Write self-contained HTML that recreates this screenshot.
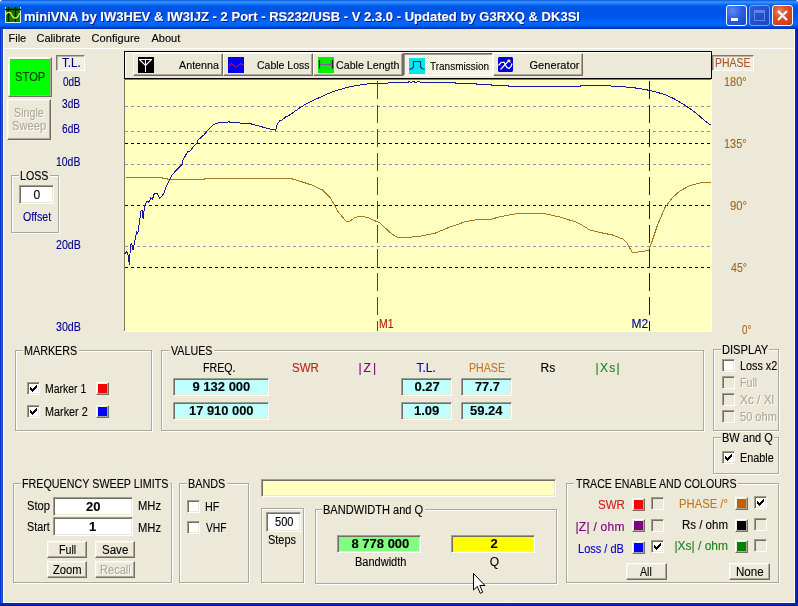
<!DOCTYPE html>
<html><head><meta charset="utf-8"><title>miniVNA</title>
<style>
*{box-sizing:border-box;margin:0;padding:0}
html,body{width:798px;height:606px;overflow:hidden;background:#fff}
body{position:relative;font-family:"Liberation Sans",sans-serif;font-size:12px;color:#000;-webkit-font-smoothing:none}
.a{position:absolute}
.t{position:absolute;white-space:pre;line-height:14px;height:14px;transform-origin:0 0;-webkit-text-stroke:0.12px currentColor}
.gb{position:absolute;border:1px solid #ACA899;box-shadow:1px 1px 0 #fff, inset 1px 1px 0 #fff}
.gl{position:absolute;background:#ECE9D8;height:12px}
.sunk{position:absolute;border:1px solid;border-color:#9D9D92 #fff #fff #9D9D92;box-shadow:inset 1px 1px 0 #716F64, inset -1px -1px 0 #ECE9D8}
.btn{position:absolute;background:#ECE9D8;border:1px solid;border-color:#fff #716F64 #716F64 #fff;box-shadow:inset -1px -1px 0 #ACA899, inset 1px 1px 0 #F4F2E8}
.cb{position:absolute;width:13px;height:13px;background:#fff;border:1px solid;border-color:#9D9D92 #fff #fff #9D9D92;box-shadow:inset 1px 1px 0 #716F64, inset -1px -1px 0 #ECE9D8}
.cb.dis{background:#ECE9D8}
.cbtn{position:absolute;width:13px;height:13px;border:1px solid;border-color:#fff #716F64 #716F64 #fff;box-shadow:inset -1px -1px 0 #ACA899, inset 1px 1px 0 #F1EFE2}
.dis-t{color:#ACA899;text-shadow:1px 1px 0 #fff}
</style></head>
<body>
<div id="w" style="position:absolute;left:0;top:0;width:798px;height:606px;will-change:transform">
<div class="a" style="left:0;top:0;width:798px;height:606px;border-radius:4px 4px 0 0;background:#0831D9"></div>
<div class="a" style="left:0;top:0;width:798px;height:29px;border-radius:4px 4px 0 0;background:linear-gradient(to bottom,#0A50D8 0%,#2A80FC 4%,#3A90FF 7%,#2C88FF 10%,#1074F8 14%,#0262EE 18%,#0057E5 24%,#0054E3 30%,#0055EB 56%,#005BF5 66%,#026AFE 78%,#0061FC 86%,#0052E0 91%,#0040C8 95%,#0030B8 100%)"></div>
<div class="a" style="left:0;top:29px;width:3px;height:577px;background:linear-gradient(to right,#0034DA 0 1px,#2060E6 1px 2px,#1846B4 2px 3px)"></div>
<div class="a" style="left:795px;top:29px;width:3px;height:577px;background:linear-gradient(to left,#00169C,#0A24B4 50%,#0A2ABC)"></div>
<div class="a" style="left:0;top:603px;width:798px;height:3px;background:linear-gradient(to top,#00169C,#0A24B4 50%,#0A2ABC)"></div>
<div class="a" style="left:3px;top:29px;width:792px;height:574px;background:#ECE9D8;border:1px solid #fff;border-top-color:#E4ECF8"></div>
<div class="a" style="left:4px;top:48px;width:791px;height:1px;background:#fff"></div>
<svg class="a" style="left:5px;top:7px" width="16" height="16" viewBox="0 0 16 16">
<rect x="0" y="0" width="16" height="16" fill="#0A7A0A"/>
<path d="M0.5 0V15.5H15.5V0" fill="none" stroke="#D8F0F0" stroke-width="1"/>
<path d="M0 2.5H16M3.5 0V15M10.5 0V15" stroke="#001800" stroke-width="1.4" fill="none"/>
<path d="M0.5 8 L2 5.8 L4.5 5.2 L6 6.5 L7.5 9.5 L9 10.8 L11 11 L13 9.5 L14.5 6" stroke="#E0F020" stroke-width="1.3" fill="none"/>
</svg>
<span class="t" style="left:24.0px;top:10.0px;font-size:13px;color:#fff;font-weight:bold;letter-spacing:0.02px;text-shadow:1px 1px 0 #0A1883;">miniVNA by IW3HEV &amp; IW3IJZ - 2 Port - RS232/USB - V 2.3.0 - Updated by G3RXQ &amp; DK3SI</span>
<div class="a" style="left:726px;top:5px;width:21px;height:21px;border:1px solid #fff;border-radius:3px;background:radial-gradient(circle at 30% 25%,#5C8CF4 0%,#2E62E0 40%,#1746C8 100%)"><div class="a" style="left:4px;top:12px;width:7px;height:3px;background:#fff"></div></div>
<div class="a" style="left:749px;top:5px;width:21px;height:21px;border:1px solid #7C9CEC;border-radius:3px;background:linear-gradient(135deg,#3560D8 0%,#2450CC 50%,#1C44BE 100%)"><div class="a" style="left:4px;top:4px;width:11px;height:11px;border:1px solid #5F84E4;border-top-width:3px"></div></div>
<div class="a" style="left:772px;top:5px;width:21px;height:21px;border:1px solid #fff;border-radius:3px;background:radial-gradient(circle at 35% 30%,#EE8A6A 0%,#E0502A 35%,#C4361A 100%)"><svg class="a" style="left:0;top:0" width="19" height="19" viewBox="0 0 19 19"><path d="M5 5L14 14M14 5L5 14" stroke="#fff" stroke-width="2.2" fill="none"/></svg></div>
<span class="t" style="left:8.5px;top:31.0px;font-size:11px;">File</span>
<span class="t" style="left:36.5px;top:31.0px;font-size:11px;">Calibrate</span>
<span class="t" style="left:91.5px;top:31.0px;font-size:11px;letter-spacing:0.08px;">Configure</span>
<span class="t" style="left:151.5px;top:31.0px;font-size:11px;">About</span>
<div class="btn" style="left:8px;top:57px;width:44px;height:40px;background:#00FF00"></div>
<span class="t" style="left:14.5px;top:70.0px;color:#004000;transform:scaleX(0.935);">STOP</span>
<div class="btn" style="left:7px;top:99px;width:44px;height:41px;"></div>
<span class="t dis-t" style="left:13.8px;top:106.0px;transform:scaleX(0.891);">Single</span>
<span class="t dis-t" style="left:11.9px;top:119.0px;transform:scaleX(0.929);">Sweep</span>
<div class="sunk" style="left:56px;top:55px;width:29px;height:16px;background:#F1EFE4;box-shadow:inset 1px 1px 0 #B8B5A6;border-color:#7E7C72 #fff #fff #7E7C72"></div>
<span class="t" style="left:62.0px;top:56.0px;color:#000090;transform:scaleX(0.961);">T.L.</span>
<span class="t" style="left:63.3px;top:75.0px;color:#000090;transform:scaleX(0.833);">0dB</span>
<span class="t" style="left:62.3px;top:97.0px;color:#000090;transform:scaleX(0.85);">3dB</span>
<span class="t" style="left:62.3px;top:122.0px;color:#000090;transform:scaleX(0.85);">6dB</span>
<span class="t" style="left:56.3px;top:155.0px;color:#000090;transform:scaleX(0.87);">10dB</span>
<span class="t" style="left:56.3px;top:238.0px;color:#000090;transform:scaleX(0.889);">20dB</span>
<span class="t" style="left:56.3px;top:320.0px;color:#000090;transform:scaleX(0.889);">30dB</span>
<div class="gb" style="left:11px;top:175px;width:48px;height:58px;"></div>
<div class="gl" style="left:18.5px;top:170px;width:31.5px"></div>
<span class="t" style="left:19.5px;top:169.0px;transform:scaleX(0.887);">LOSS</span>
<div class="sunk" style="left:19px;top:185px;width:35px;height:19px;background:#fff"></div>
<span class="t" style="left:33.5px;top:188.0px;">0</span>
<span class="t" style="left:22.5px;top:210.0px;color:#000090;transform:scaleX(0.887);">Offset</span>
<div class="a" style="left:124px;top:51px;width:588px;height:28px;border:1px solid #000;border-bottom:1px solid #000;box-shadow:inset 1px 1px 0 #fff, 0 1px 0 #8A887C"></div>
<div class="a" style="left:133px;top:53px;width:90px;height:23px;background:#ECE9D8;border:1px solid;border-color:#fff #716F64 #716F64 #fff;box-shadow:inset -1px -1px 0 #ACA899"></div>
<svg class="a" style="left:138px;top:57px" width="16" height="16" viewBox="0 0 16 16"><rect width="16" height="16" fill="#000"/><path d="M1 2.5H14M7.5 2V15" stroke="#fff" stroke-width="1" fill="none" shape-rendering="crispEdges"/><path d="M1.5 2.5L7.5 8.5L13.5 2.5" stroke="#fff" stroke-width="1.1" fill="none"/></svg>
<span class="t" style="left:178.7px;top:58.0px;font-size:11px;transform:scaleX(0.976);">Antenna</span>
<div class="a" style="left:223px;top:53px;width:90px;height:23px;background:#ECE9D8;border:1px solid;border-color:#fff #716F64 #716F64 #fff;box-shadow:inset -1px -1px 0 #ACA899"></div>
<svg class="a" style="left:228px;top:57px" width="16" height="16" viewBox="0 0 16 16"><rect width="16" height="16" fill="#0000F0"/><path d="M1 8.5L3.5 6.5L8 10.5L12 6.5L15.5 8" stroke="#D01870" stroke-width="1" fill="none"/></svg>
<span class="t" style="left:257.0px;top:58.0px;font-size:11px;transform:scaleX(0.954);">Cable Loss</span>
<div class="a" style="left:313px;top:53px;width:90px;height:23px;background:#ECE9D8;border:1px solid;border-color:#fff #716F64 #716F64 #fff;box-shadow:inset -1px -1px 0 #ACA899"></div>
<svg class="a" style="left:318px;top:57px" width="16" height="16" viewBox="0 0 16 16"><rect width="16" height="16" fill="#00F000"/><path d="M1.5 3V11.5M14.5 3V11.5" stroke="#002000" stroke-width="1.2" fill="none"/><path d="M2 7.5H14M12 5.5L14 7.5L12 9.5" stroke="#9050A0" stroke-width="1" fill="none"/></svg>
<span class="t" style="left:336.0px;top:58.0px;font-size:11px;transform:scaleX(0.969);">Cable Length</span>
<div class="a" style="left:403px;top:53px;width:90px;height:23px;background:repeating-conic-gradient(#fff 0% 25%,#ECE9D8 0% 50%) 0 0/2px 2px;border:1px solid;border-color:#716F64 #fff #fff #716F64;box-shadow:inset 1px 1px 0 #9D9A8A"></div>
<svg class="a" style="left:409px;top:58px" width="16" height="16" viewBox="0 0 16 16"><rect width="16" height="16" fill="#00E8E8"/><path d="M0.5 11.5L3 10.5L4.5 9V3.5H11.5V9L13 10.5L15.5 11.5" stroke="#103078" stroke-width="1.1" fill="none"/></svg>
<span class="t" style="left:430.0px;top:59.0px;font-size:11px;transform:scaleX(0.908);">Transmission</span>
<div class="a" style="left:493px;top:53px;width:90px;height:23px;background:#ECE9D8;border:1px solid;border-color:#fff #716F64 #716F64 #fff;box-shadow:inset -1px -1px 0 #ACA899"></div>
<svg class="a" style="left:498px;top:57px" width="16" height="16" viewBox="0 0 16 16"><path d="M1 0H14L15 1V14L14 15H1L0 14V1Z" fill="#0000D8"/><path d="M0.5 8.5L3 5.5L6 5.2L7.5 8L9 10.5L11 11.5L13 9.5L14 6.5" stroke="#fff" stroke-width="1.2" fill="none"/><path d="M2.5 12.5L11 3.5" stroke="#fff" stroke-width="1.1" fill="none"/><path d="M9.5 3L12 3L12 5.5Z" fill="#FFFF40" stroke="#FFFF40" stroke-width="0.8"/><circle cx="7" cy="8" r="1" fill="#FFFF40"/></svg>
<span class="t" style="left:529.5px;top:58.0px;font-size:11px;letter-spacing:0.06px;">Generator</span>
<div class="sunk" style="left:712px;top:55px;width:42px;height:16px;background:#F1EFE4;box-shadow:inset 1px 1px 0 #B8B5A6;border-color:#7E7C72 #fff #fff #7E7C72"></div>
<span class="t" style="left:715.0px;top:56.0px;color:#A85828;transform:scaleX(0.872);">PHASE</span>
<span class="t" style="left:724.0px;top:75.0px;color:#A06820;transform:scaleX(0.913);">180°</span>
<span class="t" style="left:723.7px;top:137.0px;color:#A06820;transform:scaleX(0.913);">135°</span>
<span class="t" style="left:729.7px;top:199.0px;color:#A06820;transform:scaleX(0.938);">90°</span>
<span class="t" style="left:730.7px;top:261.0px;color:#A06820;transform:scaleX(0.882);">45°</span>
<span class="t" style="left:741.6px;top:323.0px;color:#A06820;transform:scaleX(0.818);">0°</span>
<svg class="a" style="left:0;top:0" width="798" height="606" viewBox="0 0 798 606"><rect x="125" y="80" width="586" height="251" fill="#FFFFC0"/><path d="M124 331.5H712M711.5 79V332" stroke="#fff" stroke-width="1" fill="none" shape-rendering="crispEdges"/><path d="M124.5 331V79.5H711" stroke="#807C60" stroke-width="1" fill="none" shape-rendering="crispEdges"/><path d="M125 106.5H711" stroke="#9090B0" stroke-width="1" stroke-dasharray="3 3" fill="none" shape-rendering="crispEdges"/><path d="M125 131.5H711" stroke="#9090B0" stroke-width="1" stroke-dasharray="3 3" fill="none" shape-rendering="crispEdges"/><path d="M125 164.5H711" stroke="#9090B0" stroke-width="1" stroke-dasharray="3 3" fill="none" shape-rendering="crispEdges"/><path d="M125 246.5H711" stroke="#9090B0" stroke-width="1" stroke-dasharray="3 3" fill="none" shape-rendering="crispEdges"/><path d="M125 143.5H711" stroke="#000" stroke-width="1" stroke-dasharray="3 3" fill="none" shape-rendering="crispEdges"/><path d="M125 205.5H711" stroke="#000" stroke-width="1" stroke-dasharray="3 3" fill="none" shape-rendering="crispEdges"/><path d="M125 267.5H711" stroke="#000" stroke-width="1" stroke-dasharray="3 3" fill="none" shape-rendering="crispEdges"/><path d="M125.0 177.0 L145.0 177.5 L150.0 177.0 L160.0 177.5 L170.0 179.5 L195.0 179.5 L220.0 178.2 L255.0 178.2 L275.0 178.8 L292.5 179.0 L300.0 181.2 L312.5 185.3 L322.5 190.0 L330.0 197.5 L334.0 204.0 L337.5 211.0 L342.0 216.5 L346.2 221.2 L350.0 221.2 L355.0 217.5 L361.2 216.2 L367.5 217.5 L380.0 223.0 L390.0 232.5 L396.2 236.8 L402.5 238.0 L420.0 236.2 L435.0 233.2 L450.0 227.0 L465.0 221.8 L475.0 220.0 L490.0 219.5 L500.0 216.8 L510.0 214.8 L520.0 213.2 L542.5 213.2 L560.0 217.0 L577.5 222.5 L590.0 230.0 L600.0 232.5 L612.5 235.0 L622.5 238.8 L627.5 243.8 L632.5 253.0 L642.5 251.2 L648.8 250.8 L652.5 240.0 L657.5 225.0 L665.0 207.5 L672.5 197.5 L680.0 191.0 L690.0 185.5 L700.0 183.0 L711.0 182.5" stroke="#A47A20" stroke-width="1" fill="none" shape-rendering="crispEdges"/><path d="M124.5 253.9 L126.9 251.8 L128.2 255.7 L129.4 264.5 L130.5 244.9 L131.8 243.4 L133.1 250.3 L135.4 237.6 L136.7 232.5 L137.8 234.0 L139.6 221.3 L140.9 211.3 L142.1 210.4 L143.2 219.1 L144.5 205.8 L146.9 201.3 L149.0 202.2 L150.9 197.7 L152.3 199.5 L154.5 193.1 L157.2 193.1 L159.6 198.6 L163.6 194.0 L166.3 185.9 L169.0 181.3 L172.5 174.4 L178.8 167.5 L181.9 165.0 L183.1 160.0 L187.5 151.9 L190.0 151.0 L193.8 146.2 L197.0 143.1 L197.5 140.6 L203.8 135.0 L207.5 130.6 L213.8 124.4 L217.5 123.1 L220.0 122.5 L227.5 122.3 L228.8 121.5 L230.0 122.5 L238.8 122.5 L240.0 123.1 L248.8 123.1 L253.8 124.8 L259.8 126.2 L265.0 127.8 L275.6 130.2 L276.5 126.9 L277.5 123.8 L280.0 120.6 L281.9 120.0 L286.2 116.5 L288.8 115.6 L301.2 106.9 L307.5 103.1 L313.8 100.0 L321.2 96.9 L327.5 93.8 L335.0 91.0 L342.5 88.8 L348.8 87.1 L356.0 85.7 L362.9 84.4 L371.8 83.5 L387.6 83.4 L388.6 82.5 L408.0 82.5 L409.0 81.5 L411.0 82.5 L413.0 81.5 L416.0 82.5 L418.0 81.5 L422.0 82.5 L455.0 82.5 L456.0 83.5 L476.0 83.5 L477.0 84.5 L491.0 84.5 L492.0 85.5 L508.0 85.5 L509.0 86.5 L580.0 86.5 L581.0 85.5 L610.5 85.5 L612.0 86.5 L622.5 86.6 L630.0 87.4 L639.0 88.4 L649.6 90.4 L657.0 92.3 L664.7 94.5 L672.2 97.8 L678.2 101.1 L684.2 104.9 L690.2 108.8 L696.2 113.3 L705.3 121.1 L710.5 124.9" stroke="#1818A0" stroke-width="1" fill="none" shape-rendering="crispEdges"/><path d="M377.5 81V331" stroke="#B01818" stroke-width="1" stroke-dasharray="18 6" fill="none" shape-rendering="crispEdges"/><path d="M649.5 81V331" stroke="#1010A0" stroke-width="1" stroke-dasharray="18 6" fill="none" shape-rendering="crispEdges"/></svg>
<span class="t" style="left:378.7px;top:317.0px;color:#B01808;transform:scaleX(0.867);">M1</span>
<span class="t" style="left:631.6px;top:317.0px;color:#000090;">M2</span>
<div class="gb" style="left:15px;top:350px;width:137px;height:81px;"></div>
<div class="gl" style="left:22.5px;top:345px;width:56px"></div>
<span class="t" style="left:23.5px;top:344.0px;transform:scaleX(0.897);">MARKERS</span>
<div class="cb" style="left:27px;top:382px"><svg class="a" style="left:1px;top:1px" width="9" height="9" viewBox="0 0 9 9" shape-rendering="crispEdges"><path d="M1 3V6M2 4V7M3 5V8M4 4V7M5 3V6M6 2V5M7 1V4" stroke="#000" stroke-width="1" fill="none" transform="translate(0.5,0)"/></svg></div>
<span class="t" style="left:44.5px;top:382.0px;transform:scaleX(0.87);">Marker 1</span>
<div class="cbtn" style="left:96px;top:382px;background:#FF0000"></div>
<div class="cb" style="left:27px;top:405px"><svg class="a" style="left:1px;top:1px" width="9" height="9" viewBox="0 0 9 9" shape-rendering="crispEdges"><path d="M1 3V6M2 4V7M3 5V8M4 4V7M5 3V6M6 2V5M7 1V4" stroke="#000" stroke-width="1" fill="none" transform="translate(0.5,0)"/></svg></div>
<span class="t" style="left:44.5px;top:405.0px;transform:scaleX(0.902);">Marker 2</span>
<div class="cbtn" style="left:96px;top:405px;background:#0000FF"></div>
<div class="gb" style="left:161px;top:350px;width:543px;height:81px;"></div>
<div class="gl" style="left:168.5px;top:345px;width:45px"></div>
<span class="t" style="left:170.5px;top:344.0px;transform:scaleX(0.891);">VALUES</span>
<span class="t" style="left:202.5px;top:361.0px;transform:scaleX(0.886);">FREQ.</span>
<span class="t" style="left:292.0px;top:361.0px;color:#C02020;transform:scaleX(0.962);">SWR</span>
<span class="t" style="left:358.5px;top:361.0px;color:#800080;letter-spacing:2.0px;">|Z|</span>
<span class="t" style="left:416.5px;top:361.0px;color:#0000C0;">T.L.</span>
<span class="t" style="left:468.5px;top:361.0px;color:#C07828;transform:scaleX(0.885);">PHASE</span>
<span class="t" style="left:540.5px;top:361.0px;">Rs</span>
<span class="t" style="left:595.5px;top:361.0px;color:#208020;letter-spacing:1.33px;">|Xs|</span>
<div class="sunk" style="left:173px;top:378px;width:96px;height:18px;background:#C0FFFF"></div>
<span class="t" style="left:192.5px;top:380.0px;font-size:13px;font-weight:bold;">9 132 000</span>
<div class="sunk" style="left:173px;top:402px;width:96px;height:18px;background:#C0FFFF"></div>
<span class="t" style="left:188.5px;top:404.0px;font-size:13px;font-weight:bold;transform:scaleX(0.992);">17 910 000</span>
<div class="sunk" style="left:401px;top:378px;width:51px;height:18px;background:#C0FFFF"></div>
<span class="t" style="left:414.5px;top:380.0px;font-size:13px;font-weight:bold;">0.27</span>
<div class="sunk" style="left:401px;top:402px;width:51px;height:18px;background:#C0FFFF"></div>
<span class="t" style="left:414.0px;top:404.0px;font-size:13px;font-weight:bold;">1.09</span>
<div class="sunk" style="left:461px;top:378px;width:51px;height:18px;background:#C0FFFF"></div>
<span class="t" style="left:474.5px;top:380.0px;font-size:13px;font-weight:bold;transform:scaleX(0.98);">77.7</span>
<div class="sunk" style="left:461px;top:402px;width:51px;height:18px;background:#C0FFFF"></div>
<span class="t" style="left:470.0px;top:404.0px;font-size:13px;font-weight:bold;">59.24</span>
<div class="gb" style="left:713px;top:349px;width:66px;height:82px;"></div>
<div class="gl" style="left:720.7px;top:344px;width:48.5px"></div>
<span class="t" style="left:721.7px;top:343.0px;transform:scaleX(0.927);">DISPLAY</span>
<div class="cb" style="left:722px;top:359px"></div>
<span class="t" style="left:739.5px;top:359.0px;transform:scaleX(0.9);">Loss x2</span>
<div class="cb dis" style="left:722px;top:376px"></div>
<span class="t dis-t" style="left:739.5px;top:376.0px;transform:scaleX(0.889);">Full</span>
<div class="cb dis" style="left:722px;top:393px"></div>
<span class="t dis-t" style="left:740.0px;top:393.0px;transform:scaleX(0.985);">Xc / Xl</span>
<div class="cb dis" style="left:722px;top:410px"></div>
<span class="t dis-t" style="left:739.5px;top:410.0px;transform:scaleX(0.921);">50 ohm</span>
<div class="gb" style="left:713px;top:437px;width:66px;height:37px;"></div>
<div class="gl" style="left:720.7px;top:432px;width:53.5px"></div>
<span class="t" style="left:721.7px;top:431.0px;transform:scaleX(0.917);">BW and Q</span>
<div class="cb" style="left:722px;top:451px"><svg class="a" style="left:1px;top:1px" width="9" height="9" viewBox="0 0 9 9" shape-rendering="crispEdges"><path d="M1 3V6M2 4V7M3 5V8M4 4V7M5 3V6M6 2V5M7 1V4" stroke="#000" stroke-width="1" fill="none" transform="translate(0.5,0)"/></svg></div>
<span class="t" style="left:739.8px;top:451.0px;transform:scaleX(0.903);">Enable</span>
<div class="gb" style="left:13px;top:483px;width:159px;height:100px;"></div>
<div class="gl" style="left:20.5px;top:478px;width:149px"></div>
<span class="t" style="left:21.5px;top:477.0px;transform:scaleX(0.895);">FREQUENCY SWEEP LIMITS</span>
<span class="t" style="left:26.5px;top:499.0px;transform:scaleX(0.935);">Stop</span>
<div class="sunk" style="left:53px;top:497px;width:80px;height:19px;background:#fff"></div>
<span class="t" style="left:86.0px;top:500.0px;font-size:13px;font-weight:bold;">20</span>
<span class="t" style="left:138.0px;top:499.0px;transform:scaleX(0.935);">MHz</span>
<span class="t" style="left:26.5px;top:520.0px;transform:scaleX(0.896);">Start</span>
<div class="sunk" style="left:53px;top:517px;width:80px;height:19px;background:#fff"></div>
<span class="t" style="left:89.0px;top:520.0px;font-size:13px;font-weight:bold;">1</span>
<span class="t" style="left:138.0px;top:521.0px;transform:scaleX(0.935);">MHz</span>
<div class="btn" style="left:47px;top:541px;width:40px;height:17px;"></div>
<span class="t" style="left:58.5px;top:543.0px;transform:scaleX(0.889);">Full</span>
<div class="btn" style="left:95px;top:541px;width:40px;height:17px;"></div>
<span class="t" style="left:101.7px;top:543.0px;transform:scaleX(0.962);">Save</span>
<div class="btn" style="left:47px;top:561px;width:40px;height:17px;"></div>
<span class="t" style="left:52.5px;top:563.0px;transform:scaleX(0.933);">Zoom</span>
<div class="btn" style="left:95px;top:561px;width:40px;height:17px;"></div>
<span class="t dis-t" style="left:99.5px;top:563.0px;transform:scaleX(0.922);">Recall</span>
<div class="gb" style="left:179px;top:483px;width:70px;height:100px;"></div>
<div class="gl" style="left:186.5px;top:478px;width:40px"></div>
<span class="t" style="left:187.5px;top:477.0px;transform:scaleX(0.9);">BANDS</span>
<div class="cb" style="left:187px;top:500px"></div>
<span class="t" style="left:204.5px;top:500.0px;transform:scaleX(0.9);">HF</span>
<div class="cb" style="left:187px;top:521px"></div>
<span class="t" style="left:205.5px;top:521.0px;transform:scaleX(0.854);">VHF</span>
<div class="sunk" style="left:261px;top:479px;width:295px;height:18px;background:#FFFFC0"></div>
<div class="gb" style="left:261px;top:508px;width:43px;height:75px;"></div>
<div class="sunk" style="left:266px;top:512px;width:35px;height:20px;background:#fff"></div>
<span class="t" style="left:274.6px;top:515.0px;transform:scaleX(0.921);">500</span>
<span class="t" style="left:267.5px;top:533.0px;transform:scaleX(0.914);">Steps</span>
<div class="gb" style="left:315px;top:509px;width:242px;height:75px;"></div>
<div class="gl" style="left:322px;top:504px;width:102.5px"></div>
<span class="t" style="left:323.0px;top:503.0px;transform:scaleX(0.921);">BANDWIDTH and Q</span>
<div class="sunk" style="left:337px;top:535px;width:84px;height:18px;background:#80FF80"></div>
<span class="t" style="left:351.5px;top:537.0px;font-size:13px;font-weight:bold;">8 778 000</span>
<span class="t" style="left:355.0px;top:555.0px;transform:scaleX(0.917);">Bandwidth</span>
<div class="sunk" style="left:451px;top:535px;width:84px;height:18px;background:#FFFF00"></div>
<span class="t" style="left:490.5px;top:537.0px;font-size:13px;font-weight:bold;">2</span>
<span class="t" style="left:489.7px;top:555.0px;">Q</span>
<div class="gb" style="left:566px;top:483px;width:213px;height:100px;"></div>
<div class="gl" style="left:573.5px;top:478px;width:164.5px"></div>
<span class="t" style="left:575.5px;top:477.0px;transform:scaleX(0.882);">TRACE ENABLE AND COLOURS</span>
<span class="t" style="left:597.5px;top:498.0px;color:#D02020;transform:scaleX(0.962);">SWR</span>
<span class="t" style="left:575.5px;top:520.0px;color:#800080;letter-spacing:0.25px;">|Z| / ohm</span>
<span class="t" style="left:578.0px;top:542.0px;color:#0000C0;transform:scaleX(0.918);">Loss / dB</span>
<div class="cbtn" style="left:632px;top:498px;background:#FF0000"></div>
<div class="cb dis" style="left:651px;top:497px"></div>
<div class="cbtn" style="left:632px;top:519px;background:#800080"></div>
<div class="cb dis" style="left:651px;top:519px"></div>
<div class="cbtn" style="left:632px;top:541px;background:#0000FF"></div>
<div class="cb" style="left:651px;top:540px"><svg class="a" style="left:1px;top:1px" width="9" height="9" viewBox="0 0 9 9" shape-rendering="crispEdges"><path d="M1 3V6M2 4V7M3 5V8M4 4V7M5 3V6M6 2V5M7 1V4" stroke="#000" stroke-width="1" fill="none" transform="translate(0.5,0)"/></svg></div>
<span class="t" style="left:679.4px;top:497.0px;color:#C07828;transform:scaleX(0.94);">PHASE /°</span>
<span class="t" style="left:682.4px;top:518.0px;transform:scaleX(0.957);">Rs / ohm</span>
<span class="t" style="left:674.4px;top:539.0px;color:#208020;">|Xs| / ohm</span>
<div class="cbtn" style="left:735px;top:497px;background:#C06000"></div>
<div class="cb" style="left:753.5px;top:496px"><svg class="a" style="left:1px;top:1px" width="9" height="9" viewBox="0 0 9 9" shape-rendering="crispEdges"><path d="M1 3V6M2 4V7M3 5V8M4 4V7M5 3V6M6 2V5M7 1V4" stroke="#000" stroke-width="1" fill="none" transform="translate(0.5,0)"/></svg></div>
<div class="cbtn" style="left:735px;top:519px;background:#000000"></div>
<div class="cb dis" style="left:753.5px;top:518px"></div>
<div class="cbtn" style="left:735px;top:540px;background:#008000"></div>
<div class="cb dis" style="left:753.5px;top:539px"></div>
<div class="btn" style="left:626px;top:563px;width:41px;height:17px;"></div>
<span class="t" style="left:640.0px;top:565.0px;transform:scaleX(0.885);">All</span>
<div class="btn" style="left:729px;top:563px;width:41px;height:17px;"></div>
<span class="t" style="left:735.5px;top:565.0px;transform:scaleX(0.963);">None</span>
<svg class="a" style="left:473px;top:573px" width="13" height="22" viewBox="0 0 13 22"><path d="M0.5 0.5V17L4.3 13.4L7.2 20.3L9.7 19.2L6.8 12.5H12Z" fill="#fff" stroke="#000" stroke-width="1"/></svg>
</div>
</body></html>
